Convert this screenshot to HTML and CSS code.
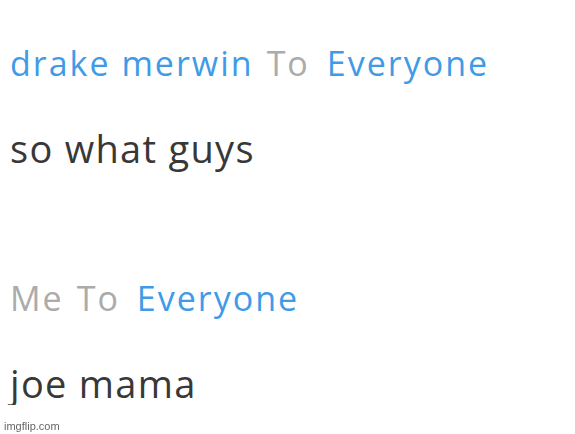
FILE: index.html
```html
<!DOCTYPE html>
<html lang="en">
<head>
  <meta charset="UTF-8" />
  <title>Chat</title>
  <link rel="stylesheet" href="styles.css">
</head>
<body>
  <div class="chat">
    <div class="message">
      <div class="meta"><span class="name">drake merwin</span><span class="to">To</span><span class="name">Everyone</span></div>
      <div class="text">so what guys</div>
    </div>
    <div class="message">
      <div class="meta"><span class="me">Me</span><span class="to">To</span><span class="name">Everyone</span></div>
      <div class="text">joe mama</div>
    </div>
  </div>
  <div class="watermark">imgflip.com</div>
</body>
</html>
```

FILE: styles.css
```css
body {
  margin: 0;
  background: #fff;
  font-family: 'Open Sans', sans-serif;
}

.chat {
  padding: 41px 0 0 10px;
}

.message + .message {
  margin-top: 106px;
}

.meta {
  display: flex;
  gap: 13px;
  font-size: 34px;
  line-height: 44px;
  letter-spacing: 2px;
}

.name {
  color: #3f9be8;
}

.me,
.to {
  color: #ababab;
}

.to {
  margin-right: 4px;
}

.text {
  margin-top: 41px;
  font-size: 38px;
  line-height: 44px;
  letter-spacing: 1.3px;
  color: #383838;
}

.watermark {
  position: fixed;
  left: 4px;
  bottom: 2px;
  font-family: 'Liberation Sans', sans-serif;
  font-size: 11px;
  color: #666;
}
```
